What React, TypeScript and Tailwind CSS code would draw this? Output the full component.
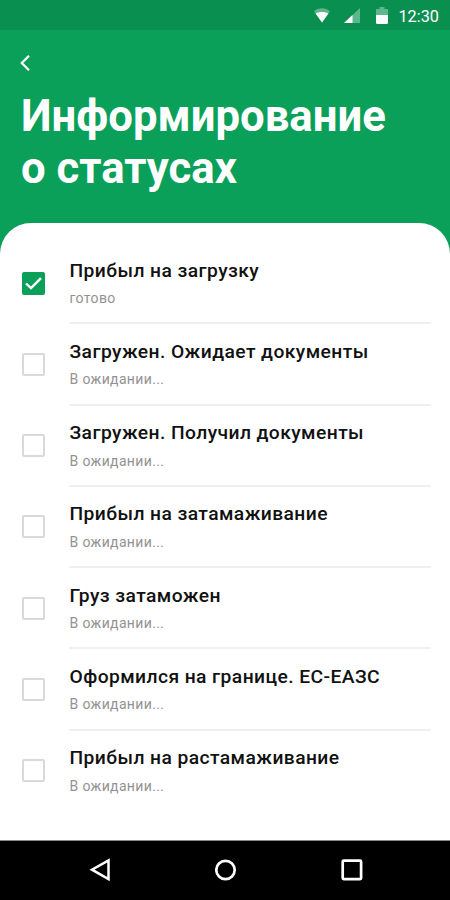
const statuses = [
  { title: 'Прибыл на загрузку', note: 'готово', done: true },
  { title: 'Загружен. Ожидает документы', note: 'В ожидании...', done: false },
  { title: 'Загружен. Получил документы', note: 'В ожидании...', done: false },
  { title: 'Прибыл на затамаживание', note: 'В ожидании...', done: false },
  { title: 'Груз затаможен', note: 'В ожидании...', done: false },
  { title: 'Оформился на границе. ЕС-ЕАЗС', note: 'В ожидании...', done: false },
  { title: 'Прибыл на растамаживание', note: 'В ожидании...', done: false }
]

const StatusBar = () => (
  <div className="flex h-[30px] shrink-0 items-center justify-end bg-[#098f50] pt-px pr-[11px] text-white">
    <svg width="16" height="15" viewBox="0 0 16 15" className="mr-[14px]">
      <path d="M0 3.2C4.5-.7 11.5-.7 16 3.2L8 14.5Z" fill="currentColor" opacity="0.35" />
      <path d="M1.6 5.4C5.4 3.4 10.6 3.4 14.4 5.4L8 14.5Z" fill="currentColor" />
    </svg>
    <svg width="16" height="15" viewBox="0 0 16 15" className="mr-[16px]">
      <path d="M16 0V15H0Z" fill="currentColor" opacity="0.35" />
      <path d="M8.5 7V15H0Z" fill="currentColor" />
    </svg>
    <svg width="12" height="18" viewBox="0 0 12 18" className="mr-[10px]">
      <path d="M3.5 0H8.5V2H12V9H0V2H3.5Z" fill="currentColor" opacity="0.35" />
      <path d="M0 8H12V15.5Q12 17 10.5 17H1.5Q0 17 0 15.5Z" fill="currentColor" />
    </svg>
    <span className="pt-[3px] text-[16.3px] leading-none">12:30</span>
  </div>
)

const Checkbox = ({ checked }: { checked: boolean }) => {
  if (checked) {
    return (
      <div className="flex h-[23px] w-[23px] items-center justify-center rounded-[2px] bg-[#0aa05a]">
        <svg width="17" height="13" viewBox="0 0 17 13" fill="none">
          <path d="M1 6.5L6 11.2L16 1.2" stroke="white" strokeWidth="2.4" />
        </svg>
      </div>
    )
  }
  return <div className="h-[23px] w-[23px] rounded-[2px] border-2 border-[#d9d9d9]" />
}

const App = () => {
  return (
    <div className="flex h-[900px] w-[450px] flex-col overflow-hidden bg-[#0aa05a] font-[Roboto,sans-serif]">
      <StatusBar />

      <header className="h-[193px] shrink-0 px-[20px] pt-[25px] text-white">
        <svg width="10" height="16" viewBox="0 0 10 16" fill="none">
          <path d="M9 0.8L1.8 8L9 15.2" stroke="currentColor" strokeWidth="2.2" />
        </svg>
        <h1 className="mt-[19px] ml-px text-[43.7px] font-bold leading-[52px] whitespace-nowrap">
          Информирование
          <br />
          о статусах
        </h1>
      </header>

      <main className="flex-1 rounded-t-[31px] bg-white pt-[20px] pr-[19px] pl-[22px]">
        {statuses.map((item, index) => (
          <div key={index} className="flex h-[81.25px]">
            <div className="w-[47px] shrink-0 pt-[28.5px]">
              <Checkbox checked={item.done} />
            </div>
            <div className={`flex-1 pt-[15.5px] ${index < statuses.length - 1 ? 'border-b-2 border-[#f0f0f0]' : ''}`}>
              <div className="ml-[0.5px] text-[19.25px] font-medium leading-6 tracking-[0.42px] whitespace-nowrap text-[#111111]">{item.title}</div>
              <div className="mt-[5.5px] ml-[0.5px] text-[14px] leading-5 tracking-[0.35px] text-[#929292]">{item.note}</div>
            </div>
          </div>
        ))}
      </main>

      <nav className="flex h-[60px] shrink-0 items-center justify-between border-t border-[#8a8a8a] bg-black pr-[87px] pb-px pl-[89px] text-white">
        <svg width="22" height="24" viewBox="0 0 22 24" fill="none" stroke="currentColor" strokeWidth="2.5">
          <path d="M19.5 2.5V21L3 11.7Z" />
        </svg>
        <svg width="22" height="22" viewBox="0 0 22 22" fill="none" stroke="currentColor" strokeWidth="2.7">
          <circle cx="10.5" cy="11" r="9.2" />
        </svg>
        <svg width="22" height="22" viewBox="0 0 22 22" fill="none" stroke="currentColor" strokeWidth="2.7">
          <rect x="1.7" y="1.7" width="18.4" height="18.4" rx="1" />
        </svg>
      </nav>
    </div>
  )
}

export default App
